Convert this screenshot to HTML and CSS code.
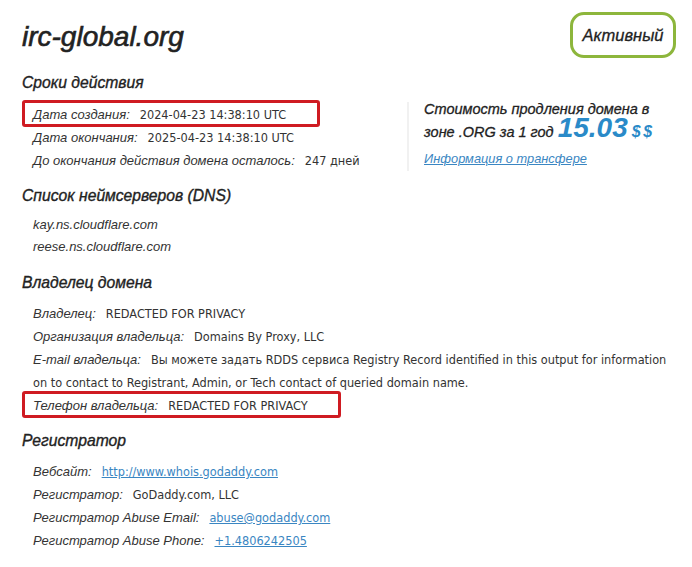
FILE: index.html
```html
<!DOCTYPE html>
<html lang="ru">
<head>
<meta charset="utf-8">
<title>irc-global.org</title>
<link rel="stylesheet" href="styles.css">
</head>
<body>
<div class="page">
  <header class="top">
    <h1 class="domain">irc-global.org</h1>
    <div class="status">Активный</div>
  </header>

  <h2 class="sec sec-first">Сроки действия</h2>
  <div class="dates">
    <div class="col">
      <div class="row hl hl-a"><span class="lbl">Дата создания:</span><span class="val">2024-04-23 14:38:10 UTC</span></div>
      <div class="row"><span class="lbl">Дата окончания:</span><span class="val">2025-04-23 14:38:10 UTC</span></div>
      <div class="row"><span class="lbl">До окончания действия домена осталось:</span><span class="val">247 дней</span></div>
    </div>
    <div class="renew">
      <p class="renew-text">Стоимость продления домена в<br>зоне .ORG за 1 год <span class="price">15.03</span> <span class="cur">$ $</span></p>
      <a class="transfer" href="#">Информация о трансфере</a>
    </div>
  </div>

  <h2 class="sec">Список неймсерверов (DNS)</h2>
  <div class="ns-list">
    <div class="ns">kay.ns.cloudflare.com</div>
    <div class="ns">reese.ns.cloudflare.com</div>
  </div>

  <h2 class="sec">Владелец домена</h2>
  <div class="group">
    <div class="row"><span class="lbl">Владелец:</span><span class="val">REDACTED FOR PRIVACY</span></div>
    <div class="row"><span class="lbl">Организация владельца:</span><span class="val">Domains By Proxy, LLC</span></div>
    <div class="row wrap"><span class="lbl">E-mail владельца:</span><span class="val">Вы можете задать RDDS сервиса Registry Record identified in this output for information on to contact to Registrant, Admin, or Tech contact of queried domain name.</span></div>
    <div class="row hl hl-b"><span class="lbl">Телефон владельца:</span><span class="val">REDACTED FOR PRIVACY</span></div>
  </div>

  <h2 class="sec">Регистратор</h2>
  <div class="group">
    <div class="row"><span class="lbl">Вебсайт:</span><a class="val link" href="#">http://www.whois.godaddy.com</a></div>
    <div class="row"><span class="lbl">Регистратор:</span><span class="val">GoDaddy.com, LLC</span></div>
    <div class="row"><span class="lbl">Регистратор Abuse Email:</span><a class="val link" href="#">abuse@godaddy.com</a></div>
    <div class="row"><span class="lbl">Регистратор Abuse Phone:</span><a class="val link" href="#">+1.4806242505</a></div>
  </div>
</div>
</body>
</html>
```

FILE: styles.css
```css
* { box-sizing: border-box; }

html, body {
  margin: 0;
  padding: 0;
  background: #ffffff;
}

body {
  font-family: "Liberation Sans", Arial, sans-serif;
  color: #2b2b2b;
}

.page {
  padding: 13px 16px 0 22px;
}

.top {
  display: flex;
  justify-content: space-between;
  align-items: center;
  height: 46px;
}

.domain {
  margin: 0;
  font-size: 28px;
  font-style: italic;
  font-weight: 400;
  color: #222;
  -webkit-text-stroke: 0.6px #222;
  line-height: 40px;
  position: relative;
  top: 1px;
}

.status {
  width: 106px;
  height: 46px;
  margin-top: -2px;
  border: 3px solid #8db63c;
  border-radius: 14px;
  display: flex;
  align-items: center;
  justify-content: center;
  font-size: 16.5px;
  font-style: italic;
  color: #222;
  -webkit-text-stroke: 0.3px #222;
}

.sec {
  margin: 13px 0 6px;
  font-size: 15.7px;
  font-style: italic;
  font-weight: 400;
  line-height: 24px;
  color: #222;
  -webkit-text-stroke: 0.35px #222;
}

.sec-first {
  margin-top: 12px;
  margin-bottom: 7px;
}

.dates {
  display: flex;
}

.col {
  width: 385px;
}

.row {
  line-height: 23px;
  padding-left: 11px;
  color: #333;
}

.lbl {
  font-style: italic;
  font-size: 13px;
  line-height: 1;
  margin-right: 10px;
  color: #333;
}

.val {
  font-family: "DejaVu Sans Condensed", "Liberation Sans", sans-serif;
  font-stretch: condensed;
  font-size: 12.6px;
  line-height: 1;
  color: #333;
}

.link {
  color: #3a86c2;
  text-decoration: underline;
}

.hl {
  outline: 3px solid #cf1b22;
  outline-offset: -1px;
  border-radius: 1px;
  margin-left: 2px;
  padding-left: 9px;
}

.hl-a { width: 294px; }
.hl-b { width: 315px; }

.renew {
  border-left: 2px solid #f1f1f1;
  padding-left: 15px;
}

.renew-text {
  margin: -4px 0 0;
  font-size: 14.5px;
  font-style: italic;
  line-height: 23px;
  color: #222;
  -webkit-text-stroke: 0.3px #222;
}

.price {
  font-size: 28px;
  font-weight: 700;
  line-height: 10px;
  color: #2a8ac8;
  -webkit-text-stroke: 0;
}

.cur {
  font-size: 16px;
  font-weight: 700;
  line-height: 10px;
  color: #2a8ac8;
  -webkit-text-stroke: 0;
  letter-spacing: -1px;
}

.transfer {
  display: block;
  margin-top: 3px;
  font-size: 12.8px;
  font-style: italic;
  line-height: 23px;
  color: #3a86c2;
  text-decoration: underline;
}

.ns-list {
  margin-top: 1px;
}

.ns {
  padding-left: 11px;
  line-height: 22px;
  font-size: 13px;
  font-style: italic;
  color: #333;
}
```
